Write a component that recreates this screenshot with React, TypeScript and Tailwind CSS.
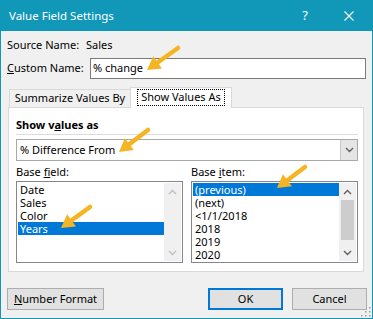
import React from "react";

// arrow overlay: tail -> tip, computed head
const arrows = [
  { tail: [178, 48], tip: [147, 70] },
  { tail: [148, 130], tip: [119, 152] },
  { tail: [305, 167], tip: [277, 188] },
  { tail: [90, 207], tip: [61, 228] },
];

const Arrow = ({ tail, tip }: { tail: number[]; tip: number[] }) => {
  const dx = tip[0] - tail[0];
  const dy = tip[1] - tail[1];
  const len = Math.hypot(dx, dy);
  const ux = dx / len;
  const uy = dy / len;
  const bx = tip[0] - ux * 13;
  const by = tip[1] - uy * 13;
  const px = -uy * 7.5;
  const py = ux * 7.5;
  return (
    <g>
      <line x1={tail[0]} y1={tail[1]} x2={bx} y2={by} stroke="#f5b423" strokeWidth="4.5" strokeLinecap="round" />
      <polygon points={`${tip[0]},${tip[1]} ${bx + px},${by + py} ${bx - px},${by - py}`} fill="#f5b423" />
    </g>
  );
};

const Chevron = ({ up, color }: { up?: boolean; color: string }) => (
  <svg width="9" height="6" viewBox="0 0 9 6">
    <path d={up ? "M1 5 L4.5 1.5 L8 5" : "M1 1 L4.5 4.5 L8 1"} fill="none" stroke={color} strokeWidth="1.4" />
  </svg>
);

const Scrollbar = ({ enabled }: { enabled: boolean }) => {
  const c = enabled ? "#606060" : "#bfbfbf";
  return (
    <div className="w-[17px] h-full bg-[#f0f0f0] flex flex-col">
      <div className="h-[17px] flex items-center justify-center">
        <Chevron up color={c} />
      </div>
      <div className="flex-1 px-[2px]">
        {enabled && <div className="h-[40px] bg-[#cdcdcd]" />}
      </div>
      <div className="h-[17px] flex items-center justify-center">
        <Chevron color={c} />
      </div>
    </div>
  );
};

const ListBox = ({ items, selected, enabled }: { items: string[]; selected: number; enabled: boolean }) => (
  <div className="w-[167px] h-[82px] border border-[#828790] bg-white p-[1px] flex">
    <div className="flex-1 flex flex-col">
      {items.map((it, i) => (
        <div
          key={it}
          className={`h-[13px] pl-[2px] leading-[13px] whitespace-nowrap ${i === selected ? "bg-[#0078d7] text-white" : "text-black"}`}
        >
          {it}
        </div>
      ))}
    </div>
    <Scrollbar enabled={enabled} />
  </div>
);

export default function App() {
  return (
    <div
      className="relative w-[373px] h-[319px] bg-[#f0f0f0] border-x border-b border-[#1198b9] text-[11px] text-black overflow-hidden whitespace-nowrap"
      style={{ fontFamily: "'Noto Sans', 'Open Sans', sans-serif" }}
    >
      {/* Title bar */}
      <div className="h-[31px] -mx-[1px] bg-[#1198b9] flex items-center text-white">
        <div className="pl-[9px] text-[11.5px] flex-1">Value Field Settings</div>
        <div className="w-[20px] text-center text-[13px] mr-[29px]">?</div>
        <svg width="10" height="10" viewBox="0 0 10 10" className="mr-[19px]">
          <path d="M0.5 0.5 L9.5 9.5 M9.5 0.5 L0.5 9.5" stroke="white" strokeWidth="1.1" />
        </svg>
      </div>

      <div className="pl-[6px]">
        {/* Source name */}
        <div className="mt-[6px] h-[16px] flex items-center">
          <span className="w-[79px]">Source Name:</span>
          <span>Sales</span>
        </div>

        {/* Custom name */}
        <div className="mt-[5px] h-[21px] flex items-center">
          <span className="w-[83px]">
            <span className="underline">C</span>ustom Name:
          </span>
          <div className="w-[276px] h-[21px] border border-[#7a7a7a] bg-white flex items-center pl-[2px]">% change</div>
        </div>

        {/* Tabs */}
        <div className="mt-[8px] h-[20px] flex items-end pl-[2px]">
          <div className="w-[121px] h-[18px] border-t border-l border-[#d9d9d9] flex items-center justify-center">
            Summarize Values By
          </div>
          <div className="relative z-10 w-[102px] h-[21px] -mb-[1px] border-t border-x border-[#d9d9d9] bg-white flex items-start justify-center pt-[1px]">
            <span className="border border-dotted border-black px-[3px] h-[17px] flex items-center">Show Values As</span>
          </div>
        </div>

        {/* Panel */}
        <div className="ml-[1px] w-[356px] h-[165px] border border-[#d9d9d9] bg-white pl-[7px]">
          <div className="mt-[9px] h-[16px] flex items-center font-bold">
            Show v<span className="underline">a</span>lues as
          </div>
          <div className="mt-[1px] w-[342px] h-px bg-[#dcdcdc]" />
          <div className="mt-[4px] w-[342px] h-[22px] border border-[#a8a8a8] bg-white flex">
            <div className="flex-1 flex items-center pl-[3px]">% Difference From</div>
            <div className="w-[17px] bg-[#e5e5e5] border-l border-[#c8c8c8] flex items-center justify-center">
              <Chevron color="#606060" />
            </div>
          </div>
          <div className="mt-[3px] h-[16px] flex items-center">
            <span className="w-[175px]">
              Base <span className="underline">f</span>ield:
            </span>
            <span>
              Base <span className="underline">i</span>tem:
            </span>
          </div>
          <div className="mt-[1px] flex gap-[8px]">
            <ListBox items={["Date", "Sales", "Color", "Years"]} selected={3} enabled={false} />
            <ListBox items={["(previous)", "(next)", "<1/1/2018", "2018", "2019", "2020"]} selected={0} enabled />
          </div>
        </div>

        {/* Buttons */}
        <div className="mt-[16px] flex items-center pr-[5px]">
          <button className="w-[97px] h-[22px] bg-[#e1e1e1] border border-[#adadad]">
            <span className="underline">N</span>umber Format
          </button>
          <div className="flex-1" />
          <button className="w-[75px] h-[22px] bg-[#e1e1e1] border-2 border-[#0078d7]">OK</button>
          <button className="ml-[9px] w-[75px] h-[22px] bg-[#e1e1e1] border border-[#adadad]">Cancel</button>
        </div>
      </div>

      {/* size grip */}
      <svg className="absolute right-[1px] bottom-[1px]" width="11" height="11" viewBox="0 0 11 11">
        {[
          [9, 1], [9, 5], [9, 9], [5, 5], [5, 9], [1, 9],
        ].map(([x, y]) => (
          <rect key={`${x}-${y}`} x={x} y={y} width="1.5" height="1.5" fill="#a0a0a0" />
        ))}
      </svg>

      {/* annotation arrows */}
      <svg className="absolute left-[-1px] top-0 pointer-events-none" width="373" height="319">
        {arrows.map((a, i) => (
          <Arrow key={i} tail={a.tail} tip={a.tip} />
        ))}
      </svg>
    </div>
  );
}
